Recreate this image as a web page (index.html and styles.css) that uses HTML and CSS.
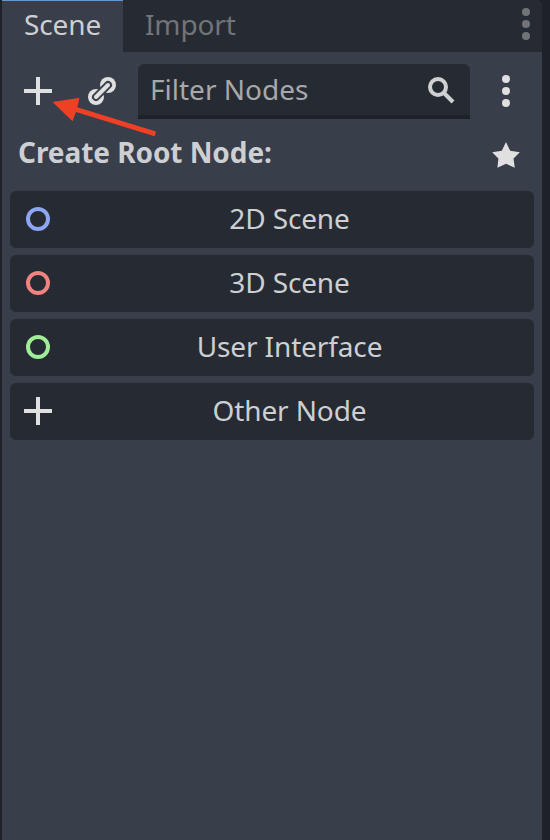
FILE: index.html
```html
<!DOCTYPE html>
<html lang="en">
<head>
<meta charset="utf-8">
<title>Scene</title>
<link rel="stylesheet" href="styles.css">
</head>
<body>
<main class="dock">
  <nav class="tabs">
    <div class="tab active">Scene</div>
    <div class="tab">Import</div>
    <svg class="tab-menu" width="8" height="32" viewBox="0 0 8 32"><circle cx="4" cy="4" r="4"/><circle cx="4" cy="16" r="4"/><circle cx="4" cy="28" r="4"/></svg>
  </nav>
  <div class="toolbar">
    <svg class="icon" width="28" height="28" viewBox="0 0 28 28"><path d="M12 0h4v12h12v4H16v12h-4V16H0v-4h12z"/></svg>
    <svg class="icon link" width="28" height="28" viewBox="0 0 28 28"><circle cx="8" cy="20" r="8"/><circle cx="20" cy="8" r="8"/><path class="link-gap" d="M8 20L20 8"/><path class="link-bar" d="M8 20L20 8"/></svg>
    <div class="filter">
      <span>Filter Nodes</span>
      <svg class="search" width="28" height="28" viewBox="0 0 28 28"><circle cx="10" cy="10" r="8"/><path d="M15.500 15.500L25 25"/></svg>
    </div>
    <svg class="icon more" width="8" height="32" viewBox="0 0 8 32"><circle cx="4" cy="4" r="4"/><circle cx="4" cy="16" r="4"/><circle cx="4" cy="28" r="4"/></svg>
  </div>
  <div class="heading">
    <span>Create Root Node:</span>
    <svg class="icon star" width="28" height="26" viewBox="0 0 28 26"><path d="M14 0l4.200 8.800 9.600 1.400-6.300 6.400 1.300 9.200-8.800-4-8.600 4 1-9.200L.2 10.200l9.600-1.400z"/></svg>
  </div>
  <div class="choices">
    <div class="choice"><svg class="ring blue" width="28" height="28" viewBox="0 0 28 28"><circle cx="14" cy="14" r="10"/></svg><span>2D Scene</span></div>
    <div class="choice"><svg class="ring red" width="28" height="28" viewBox="0 0 28 28"><circle cx="14" cy="14" r="10"/></svg><span>3D Scene</span></div>
    <div class="choice"><svg class="ring green" width="28" height="28" viewBox="0 0 28 28"><circle cx="14" cy="14" r="10"/></svg><span>User Interface</span></div>
    <div class="choice"><svg class="icon" width="28" height="28" viewBox="0 0 28 28"><path d="M12 0h4v12h12v4H16v12h-4V16H0v-4h12z"/></svg><span>Other Node</span></div>
  </div>
</main>
<svg class="arrow" width="106" height="42" viewBox="0 0 106 42"><path d="M.5 4L27.500-.3 25.300 9.200 104 33.500 102.700 38.300 24 14 20.500 23.300z"/></svg>
</body>
</html>
```
FILE: styles.css
```css
* { box-sizing: border-box; }
body {
  margin: 0;
  height: 840px;
  padding: 0 8px 0 2px;
  position: relative;
  overflow: hidden;
  background: #1e2129;
  color: #cdcfd2;
  font: 28px/38px "Noto Sans", sans-serif;
}
svg { display: block; flex: none; }
.dock { height: 840px; background: #383e4a; border-top-right-radius: 6px; overflow: hidden; }
.tabs { display: flex; height: 52px; background: #262b33; padding-right: 12px; letter-spacing: -0.12px; }
.tab { padding: 5px 22px 0; color: #727478; white-space: nowrap; }
.tab.active { width: 121px; background: #383e4a; color: #cdcfd2; border-top: 1px solid #6797d0; padding-top: 4px; }
.tab-menu { margin: 8px 0 0 auto; fill: #727377; }
.toolbar { display: flex; align-items: flex-start; height: 55px; margin-top: 12px; padding: 0 32px 0 22px; }
.icon { flex: none; fill: #e0e0e0; }
.toolbar > .icon { margin-top: 13px; }
.toolbar > .link { margin-left: 36px; }
.link-gap, .link-bar { stroke-linecap: round; stroke-width: 8px; stroke: #383e4a; }
.link-bar { stroke-width: 4px; stroke: #e0e0e0; }
.filter {
  display: flex;
  justify-content: space-between;
  width: 332px;
  height: 55px;
  margin-left: 22px;
  padding: 6px 14px 0 12px;
  border-radius: 6px 6px 0 0;
  border-bottom: 4px solid #1e2128;
  background: #262b33;
  color: #a6a8ab;
}
.search { margin-top: 7px; fill: none; stroke: #cfd0d1; stroke-width: 4px; }
.toolbar > .more { margin: 11px 0 0 32px; }
.heading { display: flex; justify-content: space-between; height: 72px; padding: 14px 22px 0 16px; font-weight: 700; letter-spacing: -0.06px; }
.star { margin-top: 9px; }
.choices { display: grid; gap: 7px; padding: 0 8px; }
.choice { display: flex; align-items: flex-start; height: 57px; padding: 14px 14px 0; border-radius: 6px; background: #262b33; }
.choice span { flex: 1; text-align: center; margin: -6px 0 0 7px; letter-spacing: -0.12px; }
.ring { fill: none; stroke-width: 4px; }
.blue { stroke: #8da5f3; }
.red { stroke: #f0827f; }
.green { stroke: #a0ef98; }
.arrow { position: absolute; left: 52px; top: 98px; fill: #ee4025; overflow: visible; }
```
